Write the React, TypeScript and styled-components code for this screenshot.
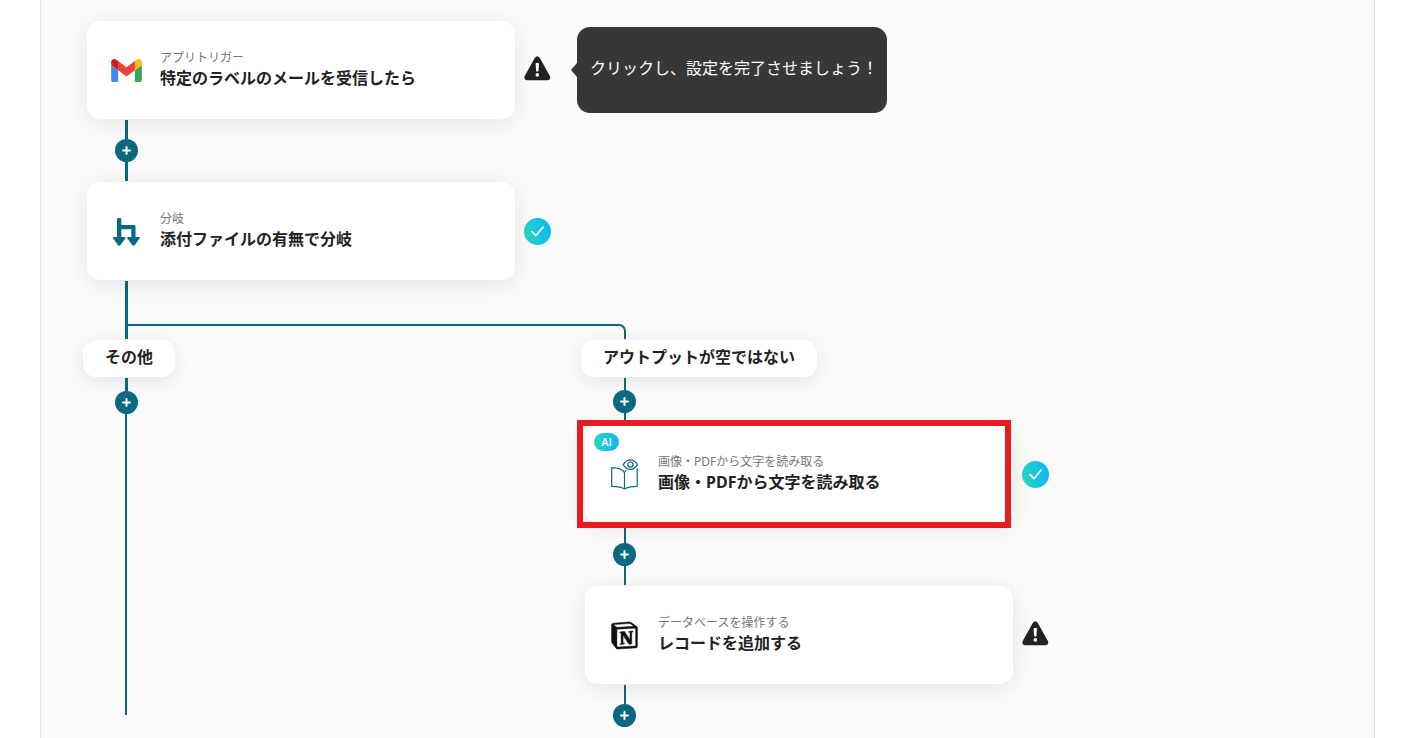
import React from "react";
import styled, { createGlobalStyle } from "styled-components";
import { SiNotion } from "react-icons/si";

const TEAL = "#0a6980";
const AQUA = "linear-gradient(80deg, #2bd9bf 0%, #0db3f7 100%)";

const GlobalStyle = createGlobalStyle`
  *, *::before, *::after { box-sizing: border-box; }
  body {
    margin: 0;
    background: #fff;
    color: #222;
    font-family: "Noto Sans", "Noto Sans CJK JP", sans-serif;
    font-size: 16px;
  }
  button { font: inherit; color: inherit; border: 0; margin: 0; cursor: pointer; }
`;

const Canvas = styled.main`
  min-height: 100vh;
  margin: 0 38px 0 40px;
  padding: 21px 46px 11px;
  background: #fafafa;
  border: solid #e4e4e4;
  border-width: 0 1px;
`;

const StepRow = styled.div`
  display: flex;
  align-items: center;
`;

const Card = styled.button`
  position: relative;
  flex: none;
  display: grid;
  grid-template-columns: 31px 1fr;
  column-gap: 18px;
  align-items: center;
  width: 428px;
  padding: 28px 24px 30px;
  text-align: left;
  background: #fff;
  border-radius: 13px;
  box-shadow: 0 4px 26px rgba(0, 0, 0, 0.09);
`;

const IconSlot = styled.span`
  display: flex;
  justify-content: center;
  align-items: center;
  height: 40px;
  padding-top: 3px;
`;

const CardText = styled.span`
  display: flex;
  flex-direction: column;
`;

const Caption = styled.span`
  font-size: 12px;
  line-height: 18px;
  color: #777;
`;

const Title = styled.span`
  font-weight: 700;
  line-height: 22px;
  white-space: nowrap;
`;

const AiBadge = styled.span`
  position: absolute;
  top: 8px;
  left: 9px;
  width: 25px;
  border-radius: 9px;
  background: ${AQUA};
  color: #fff;
  font-family: "Open Sans", sans-serif;
  font-size: 11px;
  font-weight: 600;
  line-height: 18px;
  text-align: center;
`;

const Highlight = styled.span`
  position: absolute;
  inset: -5px 2px -5px -8px;
  border: 6px solid #e81c1c;
  pointer-events: none;
`;

const Status = styled.span`
  flex: none;
  display: flex;
  width: 27px;
  margin-left: 9px;
`;

const WarningStatus = styled(Status)`
  padding-bottom: 4px;
`;

const CheckStatus = styled(Status)`
  justify-content: center;
  align-items: center;
  height: 27px;
  border-radius: 50%;
  background: ${AQUA};
`;

const Tooltip = styled.div`
  position: relative;
  flex: none;
  margin-left: 26px;
  padding: 29px 9px 33px 13px;
  border-radius: 13px;
  background: #373737;
  color: #fff;
  line-height: 24px;
  white-space: nowrap;

  &::before {
    content: "";
    position: absolute;
    top: 36px;
    left: -6px;
    border: solid transparent;
    border-width: 7px 6px 7px 0;
    border-right-color: #373737;
  }
`;

const Connector = styled.div<{ $open?: boolean }>`
  display: flex;
  flex-direction: column;
  align-items: flex-start;
  flex: ${(p) => (p.$open ? "1" : "none")};
  width: 23px;
  margin-left: 28px;
  padding-bottom: ${(p) => (p.$open ? 12 : 0)}px;
`;

interface LineProps {
  $weight: 2 | 3;
  $length?: number;
  $inset?: number;
  $gapTop?: boolean;
  $gapBottom?: boolean;
}

const Line = styled.span<LineProps>`
  width: ${(p) => p.$weight}px;
  margin-left: ${(p) => p.$inset ?? 10}px;
  margin-top: ${(p) => (p.$gapTop ? 1 : 0)}px;
  margin-bottom: ${(p) => (p.$gapBottom ? 1 : 0)}px;
  ${(p) => (p.$length ? `height: ${p.$length}px;` : "flex: 1;")}
  background: ${TEAL};
`;

const AddButton = styled.button`
  display: flex;
  justify-content: center;
  align-items: center;
  width: 23px;
  height: 23px;
  padding: 0;
  border-radius: 50%;
  background: ${TEAL};
`;

const Fork = styled.div`
  display: flex;
  align-items: flex-end;
  margin: 1px 0 1px 38px;
`;

const Stem = styled.span`
  width: 3px;
  height: 58px;
  background: ${TEAL};
`;

const Elbow = styled.span`
  width: 498px;
  height: 15px;
  border: solid ${TEAL};
  border-width: 2px 2px 0 0;
  border-top-right-radius: 7px;
`;

const Branches = styled.div`
  display: grid;
  grid-template-columns: 498px 1fr;
`;

const Branch = styled.section`
  display: flex;
  flex-direction: column;
  align-items: flex-start;
`;

const BranchLabel = styled.h2`
  margin: 0 0 0 -4px;
  padding: 5px 22px 8px;
  border-radius: 13px;
  background: #fff;
  box-shadow: 0 4px 22px rgba(0, 0, 0, 0.09);
  font-size: 16px;
  font-weight: 700;
  line-height: 24px;
  white-space: nowrap;
`;

const GmailIcon = () => (
  <svg width="31" height="23" viewBox="52 42 88 66" aria-hidden="true">
    <path fill="#4285f4" d="M58 108h14V74L52 59v43c0 3.32 2.69 6 6 6" />
    <path fill="#34a853" d="M120 108h14c3.32 0 6-2.69 6-6V59l-20 15" />
    <path fill="#fbbc04" d="M120 48v26l20-15v-8c0-7.42-8.47-11.65-14.4-7.2" />
    <path fill="#ea4335" d="M72 74V48l24 18 24-18v26L96 92" />
    <path fill="#c5221f" d="M52 51v8l20 15V48l-5.6-4.2c-5.94-4.45-14.4-.22-14.4 7.2" />
  </svg>
);

const BranchIcon = () => (
  <svg width="27" height="28" viewBox="0 0 27 28" fill={TEAL} aria-hidden="true">
    <path d="M4 1.4Q4 0 5.4 0h1.5q1.4 0 1.4 1.4V7h12.8q1.4 0 1.4 1.4V19h3.1q2 .1 1 1.6l-5 6.6q-1.1 1.2-2.2 0l-5-6.6q-1-1.5 1-1.6h2.9v-7.700h-10V19h3q2 .1 1 1.600l-5 6.600q-1.100 1.200-2.200 0l-5-6.600q-1-1.500 1-1.600H4z" />
  </svg>
);

const BookIcon = () => (
  <svg width="27" height="31" viewBox="0 0 27 31" fill="none" stroke={TEAL} strokeWidth="1.2" strokeLinejoin="round" aria-hidden="true">
    <path d="M13.5 13.6C11.7 10.4 7.4 8.8.7 8.7v18.7c5.8.2 10.2.9 12.8 2.6 2.6-1.7 7-2.4 12.7-2.6V9.2" />
    <path d="M13.5 30V13.6q.6-1.4 2-2.5" />
    <path d="M12.2 5.6Q15.2.9 19.4.9t7.1 4.700q-2.900 4.700-7.100 4.700t-7.200-4.700z" />
    <circle cx="19.4" cy="5.6" r="2.6" />
  </svg>
);

const WarningIcon = () => (
  <svg width="27" height="25" viewBox="0 0 27 25" role="img" aria-label="未設定">
    <path fill="#222" d="M10.9 1.7q2.4-3 4.8 0L26 20.2q1.2 3.6-2.4 4H3q-3.6-.4-2.4-4z" />
    <path fill="#fff" d="M11.6 7.6q1.7-1.8 3.4 0l-.5 7.4q-1.2 1.2-2.4 0z" />
    <circle cx="13.3" cy="18.9" r="1.8" fill="#fff" />
  </svg>
);

const CheckIcon = () => (
  <svg width="13" height="11" viewBox="0 0 13 11" fill="none" stroke="#fff" strokeWidth="1.7" strokeLinecap="round" strokeLinejoin="round" role="img" aria-label="設定済み">
    <path d="M1 5.7 4.8 9.7 12 1.2" />
  </svg>
);

const Add = () => (
  <AddButton type="button" aria-label="追加">
    <svg width="9" height="9" viewBox="0 0 9 9" stroke="#fff" strokeWidth="2" strokeLinecap="round" aria-hidden="true">
      <path d="M4.5 1v7M1 4.5h7" />
    </svg>
  </AddButton>
);

interface StepProps {
  icon: React.ReactNode;
  caption: string;
  title: string;
  done?: boolean;
  ai?: boolean;
  highlighted?: boolean;
  hint?: string;
}

const Step = ({ icon, caption, title, done, ai, highlighted, hint }: StepProps) => (
  <StepRow>
    <Card type="button">
      <IconSlot>{icon}</IconSlot>
      <CardText>
        <Caption>{caption}</Caption>
        <Title>{title}</Title>
      </CardText>
      {ai && <AiBadge>AI</AiBadge>}
      {highlighted && <Highlight />}
    </Card>
    {done ? (
      <CheckStatus><CheckIcon /></CheckStatus>
    ) : (
      <WarningStatus><WarningIcon /></WarningStatus>
    )}
    {hint && <Tooltip role="tooltip">{hint}</Tooltip>}
  </StepRow>
);

export default function App() {
  return (
    <>
      <GlobalStyle />
      <Canvas>
        <Step
          icon={<GmailIcon />}
          caption="アプリトリガー"
          title="特定のラベルのメールを受信したら"
          hint="クリックし、設定を完了させましょう！"
        />
        <Connector>
          <Line $weight={3} $length={19} $gapTop />
          <Add />
          <Line $weight={3} $length={19} $gapBottom />
        </Connector>
        <Step icon={<BranchIcon />} caption="分岐" title="添付ファイルの有無で分岐" done />
        <Fork>
          <Stem />
          <Elbow />
        </Fork>
        <Branches>
          <Branch>
            <BranchLabel>その他</BranchLabel>
            <Connector $open>
              <Line $weight={3} $length={13} $gapTop />
              <Add />
              <Line $weight={2} />
            </Connector>
          </Branch>
          <Branch>
            <BranchLabel>アウトプットが空ではない</BranchLabel>
            <Connector>
              <Line $weight={2} $inset={11} $length={12} $gapTop />
              <Add />
              <Line $weight={2} $inset={11} $length={11} $gapBottom />
            </Connector>
            <Step
              icon={<BookIcon />}
              caption="画像・PDFから文字を読み取る"
              title="画像・PDFから文字を読み取る"
              done
              ai
              highlighted
            />
            <Connector>
              <Line $weight={2} $inset={11} $length={19} $gapTop />
              <Add />
              <Line $weight={2} $inset={11} $length={19} $gapBottom />
            </Connector>
            <Step
              icon={<SiNotion size={27} color="#111" stroke="#111" strokeWidth="0.4" overflow="visible" />}
              caption="データベースを操作する"
              title="レコードを追加する"
            />
            <Connector>
              <Line $weight={2} $inset={11} $length={19} $gapTop />
              <Add />
            </Connector>
          </Branch>
        </Branches>
      </Canvas>
    </>
  );
}
